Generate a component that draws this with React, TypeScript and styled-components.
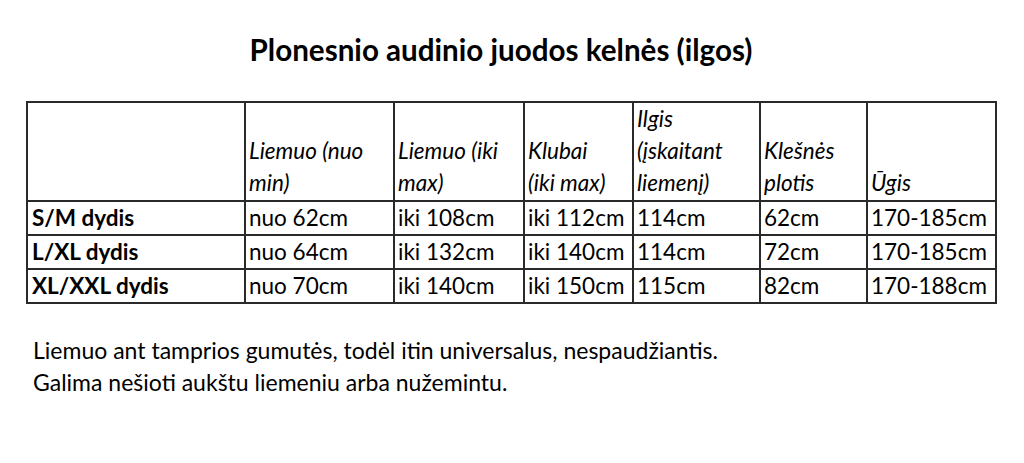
import React from "react";
import styled, { createGlobalStyle } from "styled-components";

const Global = createGlobalStyle`
  html, body { margin: 0; padding: 0; background: #ffffff; }
  body { font-family: Lato, "Open Sans", sans-serif; color: #000; }
`;

const Page = styled.div`
  width: 1024px;
  height: 463px;
  box-sizing: border-box;
  padding: 31px 0 0 26px;
  display: flex;
  flex-direction: column;
`;

const Title = styled.h1`
  margin: 0;
  width: 950px;
  text-align: center;
  font-size: 29.6px;
  font-weight: 700;
  line-height: 37px;
  color: #000;
`;

const Table = styled.table`
  margin-top: 33px;
  border-collapse: collapse;
  table-layout: fixed;
  width: 969px;
  font-size: 22.5px;
  color: #000;
  border: 2px solid #2a2a2a;
`;

const Col = styled.col<{ $w: number }>`
  width: ${(p) => p.$w}px;
`;

const HeadRow = styled.tr`
  height: 96px;
`;

const BodyRow = styled.tr`
  height: 34px;
`;

const HeadCell = styled.th`
  border: 2px solid #2a2a2a;
  padding: 0 3px 1px 3px;
  text-align: left;
  vertical-align: bottom;
  font-weight: 400;
  font-style: italic;
  line-height: 32px;
  white-space: nowrap;
`;

const RowHead = styled.th`
  border: 2px solid #2a2a2a;
  padding: 0 4px;
  text-align: left;
  font-weight: 700;
  line-height: 26px;
  white-space: nowrap;
`;

const Cell = styled.td`
  border: 2px solid #2a2a2a;
  padding: 0 3px;
  line-height: 26px;
  white-space: nowrap;
`;

const Notes = styled.div`
  margin: 30px 0 0 7px;
  font-size: 23px;
  line-height: 32px;
  color: #000;
`;

const Line = styled.p`
  margin: 0;
`;

const cols = [218, 149, 130, 109, 127, 107, 129];

const headers: string[][] = [
  [],
  ["Liemuo (nuo", "min)"],
  ["Liemuo (iki", "max)"],
  ["Klubai", "(iki max)"],
  ["Ilgis", "(įskaitant", "liemenį)"],
  ["Klešnės", "plotis"],
  ["Ūgis"],
];

const rows: string[][] = [
  ["S/M dydis", "nuo 62cm", "iki 108cm", "iki 112cm", "114cm", "62cm", "170-185cm"],
  ["L/XL dydis", "nuo 64cm", "iki 132cm", "iki 140cm", "114cm", "72cm", "170-185cm"],
  ["XL/XXL dydis", "nuo 70cm", "iki 140cm", "iki 150cm", "115cm", "82cm", "170-188cm"],
];

export default function App() {
  return (
    <>
      <Global />
      <Page>
        <Title>Plonesnio audinio juodos kelnės (ilgos)</Title>
        <Table>
          <colgroup>
            {cols.map((w, i) => (
              <Col key={i} $w={w} />
            ))}
          </colgroup>
          <thead>
            <HeadRow>
              {headers.map((lines, i) => (
                <HeadCell key={i}>
                  {lines.map((l, j) => (
                    <React.Fragment key={j}>
                      {j > 0 && <br />}
                      {l}
                    </React.Fragment>
                  ))}
                </HeadCell>
              ))}
            </HeadRow>
          </thead>
          <tbody>
            {rows.map((r) => (
              <BodyRow key={r[0]}>
                <RowHead>{r[0]}</RowHead>
                {r.slice(1).map((c, i) => (
                  <Cell key={i}>{c}</Cell>
                ))}
              </BodyRow>
            ))}
          </tbody>
        </Table>
        <Notes>
          <Line>Liemuo ant tamprios gumutės, todėl itin universalus, nespaudžiantis.</Line>
          <Line>Galima nešioti aukštu liemeniu arba nužemintu.</Line>
        </Notes>
      </Page>
    </>
  );
}
